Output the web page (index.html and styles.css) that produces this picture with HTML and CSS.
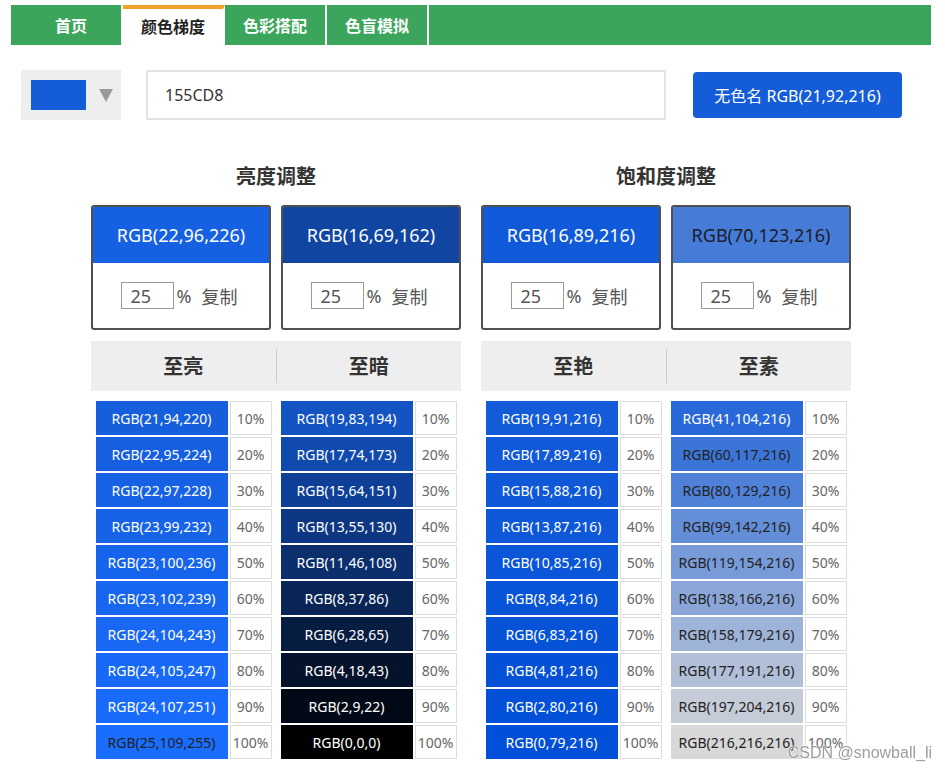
FILE: index.html
```html
<!DOCTYPE html>
<html lang="zh-CN">
<head>
<meta charset="utf-8">
<title>颜色梯度</title>
<link rel="stylesheet" href="styles.css">
</head>
<body>
<nav class="nav">
  <a class="tab tab-first">首页</a>
  <a class="tab tab-active">颜色梯度</a>
  <a class="tab">色彩搭配</a>
  <a class="tab">色盲模拟</a>
</nav>

<div class="toolbar">
  <div class="picker">
    <span class="swatch"></span>
    <span class="caret"></span>
  </div>
  <input class="hex" type="text" value="155CD8">
  <button class="name-btn">无色名 RGB(21,92,216)</button>
</div>

<main class="main">
  <section class="group">
    <h2 class="group-title">亮度调整</h2>
    <div class="cards">
      <div class="card">
        <div class="card-color" style="background:rgb(22,96,226)">RGB(22,96,226)</div>
        <div class="card-ctrl"><input class="pct-input" type="text" value="25"><span class="pct-sign">%</span><span class="copy">复制</span></div>
      </div>
      <div class="card">
        <div class="card-color" style="background:rgb(16,69,162)">RGB(16,69,162)</div>
        <div class="card-ctrl"><input class="pct-input" type="text" value="25"><span class="pct-sign">%</span><span class="copy">复制</span></div>
      </div>
    </div>
    <div class="heads">
      <div class="head">至亮</div>
      <div class="head head-right">至暗</div>
    </div>
    <div class="cols">
      <div class="col">
        <table class="grad">
          <tr><td class="c" style="background:rgb(21,94,220)">RGB(21,94,220)</td><td class="p">10%</td></tr>
          <tr><td class="c" style="background:rgb(22,95,224)">RGB(22,95,224)</td><td class="p">20%</td></tr>
          <tr><td class="c" style="background:rgb(22,97,228)">RGB(22,97,228)</td><td class="p">30%</td></tr>
          <tr><td class="c" style="background:rgb(23,99,232)">RGB(23,99,232)</td><td class="p">40%</td></tr>
          <tr><td class="c" style="background:rgb(23,100,236)">RGB(23,100,236)</td><td class="p">50%</td></tr>
          <tr><td class="c" style="background:rgb(23,102,239)">RGB(23,102,239)</td><td class="p">60%</td></tr>
          <tr><td class="c" style="background:rgb(24,104,243)">RGB(24,104,243)</td><td class="p">70%</td></tr>
          <tr><td class="c" style="background:rgb(24,105,247)">RGB(24,105,247)</td><td class="p">80%</td></tr>
          <tr><td class="c" style="background:rgb(24,107,251)">RGB(24,107,251)</td><td class="p">90%</td></tr>
          <tr><td class="c dark" style="background:rgb(25,109,255)">RGB(25,109,255)</td><td class="p">100%</td></tr>
        </table>
      </div>
      <div class="col">
        <table class="grad">
          <tr><td class="c" style="background:rgb(19,83,194)">RGB(19,83,194)</td><td class="p">10%</td></tr>
          <tr><td class="c" style="background:rgb(17,74,173)">RGB(17,74,173)</td><td class="p">20%</td></tr>
          <tr><td class="c" style="background:rgb(15,64,151)">RGB(15,64,151)</td><td class="p">30%</td></tr>
          <tr><td class="c" style="background:rgb(13,55,130)">RGB(13,55,130)</td><td class="p">40%</td></tr>
          <tr><td class="c" style="background:rgb(11,46,108)">RGB(11,46,108)</td><td class="p">50%</td></tr>
          <tr><td class="c" style="background:rgb(8,37,86)">RGB(8,37,86)</td><td class="p">60%</td></tr>
          <tr><td class="c" style="background:rgb(6,28,65)">RGB(6,28,65)</td><td class="p">70%</td></tr>
          <tr><td class="c" style="background:rgb(4,18,43)">RGB(4,18,43)</td><td class="p">80%</td></tr>
          <tr><td class="c" style="background:rgb(2,9,22)">RGB(2,9,22)</td><td class="p">90%</td></tr>
          <tr><td class="c" style="background:rgb(0,0,0)">RGB(0,0,0)</td><td class="p">100%</td></tr>
        </table>
      </div>
    </div>
  </section>

  <section class="group">
    <h2 class="group-title">饱和度调整</h2>
    <div class="cards">
      <div class="card">
        <div class="card-color" style="background:rgb(16,89,216)">RGB(16,89,216)</div>
        <div class="card-ctrl"><input class="pct-input" type="text" value="25"><span class="pct-sign">%</span><span class="copy">复制</span></div>
      </div>
      <div class="card">
        <div class="card-color dark" style="background:rgb(70,123,216)">RGB(70,123,216)</div>
        <div class="card-ctrl"><input class="pct-input" type="text" value="25"><span class="pct-sign">%</span><span class="copy">复制</span></div>
      </div>
    </div>
    <div class="heads">
      <div class="head">至艳</div>
      <div class="head head-right">至素</div>
    </div>
    <div class="cols">
      <div class="col">
        <table class="grad">
          <tr><td class="c" style="background:rgb(19,91,216)">RGB(19,91,216)</td><td class="p">10%</td></tr>
          <tr><td class="c" style="background:rgb(17,89,216)">RGB(17,89,216)</td><td class="p">20%</td></tr>
          <tr><td class="c" style="background:rgb(15,88,216)">RGB(15,88,216)</td><td class="p">30%</td></tr>
          <tr><td class="c" style="background:rgb(13,87,216)">RGB(13,87,216)</td><td class="p">40%</td></tr>
          <tr><td class="c" style="background:rgb(10,85,216)">RGB(10,85,216)</td><td class="p">50%</td></tr>
          <tr><td class="c" style="background:rgb(8,84,216)">RGB(8,84,216)</td><td class="p">60%</td></tr>
          <tr><td class="c" style="background:rgb(6,83,216)">RGB(6,83,216)</td><td class="p">70%</td></tr>
          <tr><td class="c" style="background:rgb(4,81,216)">RGB(4,81,216)</td><td class="p">80%</td></tr>
          <tr><td class="c" style="background:rgb(2,80,216)">RGB(2,80,216)</td><td class="p">90%</td></tr>
          <tr><td class="c" style="background:rgb(0,79,216)">RGB(0,79,216)</td><td class="p">100%</td></tr>
        </table>
      </div>
      <div class="col">
        <table class="grad">
          <tr><td class="c" style="background:rgb(41,104,216)">RGB(41,104,216)</td><td class="p">10%</td></tr>
          <tr><td class="c dark" style="background:rgb(60,117,216)">RGB(60,117,216)</td><td class="p">20%</td></tr>
          <tr><td class="c dark" style="background:rgb(80,129,216)">RGB(80,129,216)</td><td class="p">30%</td></tr>
          <tr><td class="c dark" style="background:rgb(99,142,216)">RGB(99,142,216)</td><td class="p">40%</td></tr>
          <tr><td class="c dark" style="background:rgb(119,154,216)">RGB(119,154,216)</td><td class="p">50%</td></tr>
          <tr><td class="c dark" style="background:rgb(138,166,216)">RGB(138,166,216)</td><td class="p">60%</td></tr>
          <tr><td class="c dark" style="background:rgb(158,179,216)">RGB(158,179,216)</td><td class="p">70%</td></tr>
          <tr><td class="c dark" style="background:rgb(177,191,216)">RGB(177,191,216)</td><td class="p">80%</td></tr>
          <tr><td class="c dark" style="background:rgb(197,204,216)">RGB(197,204,216)</td><td class="p">90%</td></tr>
          <tr><td class="c dark" style="background:rgb(216,216,216)">RGB(216,216,216)</td><td class="p">100%</td></tr>
        </table>
      </div>
    </div>
  </section>
</main>

<div class="watermark">CSDN @snowball_li</div>
</body>
</html>
```

FILE: styles.css
```css
* { box-sizing: border-box; }

html, body {
  margin: 0;
  padding: 0;
  background: #fff;
}

body {
  font-family: "Noto Sans", "Noto Sans CJK SC", sans-serif;
  color: #333;
  overflow: hidden;
}

.nav {
  display: flex;
  height: 40px;
  margin: 5px 14px 0 11px;
  background: #3ba55c;
}

.tab {
  display: flex;
  align-items: center;
  justify-content: center;
  width: 102px;
  height: 40px;
  border-right: 2px solid #fff;
  color: #fff;
  font-family: "Noto Sans CJK SC", sans-serif;
  font-weight: 700;
  font-size: 16px;
  text-decoration: none;
}

.tab-first {
  width: 112px;
  padding-left: 10px;
}

.tab-active {
  background: #fff;
  color: #222;
  border-top: 4px solid #f0a22a;
  padding-bottom: 2px;
}

.toolbar {
  display: flex;
  align-items: center;
  height: 50px;
  margin: 25px 0 0 21px;
}

.picker {
  display: flex;
  align-items: center;
  width: 100px;
  height: 50px;
  background: #eeeeee;
  padding-left: 10px;
}

.swatch {
  width: 55px;
  height: 30px;
  background: #155cd8;
}

.caret {
  width: 0;
  height: 0;
  margin-left: 13px;
  border-left: 7px solid transparent;
  border-right: 7px solid transparent;
  border-top: 13px solid #999;
}

.hex {
  width: 520px;
  height: 50px;
  margin-left: 25px;
  border: 2px solid #e3e3e3;
  padding: 0 0 0 17px;
  font-family: "Noto Sans", sans-serif;
  font-size: 16px;
  color: #333;
  outline: none;
}

.name-btn {
  width: 209px;
  height: 46px;
  margin-left: 27px;
  border: none;
  border-radius: 4px;
  background: #155cd8;
  color: #fff;
  font-family: "Noto Sans", "Noto Sans CJK SC", sans-serif;
  font-size: 16px;
  padding: 0;
}

.main {
  display: flex;
  gap: 20px;
  width: 760px;
  margin: 0 0 0 91px;
}

.group {
  width: 370px;
}

.group-title {
  margin: 41px 0 0;
  height: 30px;
  line-height: 30px;
  text-align: center;
  font-family: "Noto Sans CJK SC", sans-serif;
  font-size: 20px;
  font-weight: 700;
  color: #333;
}

.cards {
  display: flex;
  gap: 10px;
  margin-top: 14px;
}

.card {
  width: 180px;
  height: 125px;
  border: 2px solid #505050;
  border-radius: 3px;
  overflow: hidden;
}

.card-color {
  height: 56px;
  display: flex;
  align-items: center;
  justify-content: center;
  color: #fff;
  font-size: 18px;
}

.card-color.dark { color: #1c1c28; }

.card-ctrl {
  display: flex;
  align-items: center;
  justify-content: center;
  height: 65px;
  padding-right: 4px;
  color: #555;
  font-size: 18px;
}

.pct-input {
  width: 53px;
  height: 27px;
  border: 1px solid #9a9a9a;
  padding: 0 0 0 9px;
  font-family: "Noto Sans", sans-serif;
  font-size: 18px;
  color: #555;
  outline: none;
}

.pct-sign {
  margin-left: 3px;
}

.copy {
  margin-left: 10px;
  font-family: "Noto Sans CJK SC", sans-serif;
}

.heads {
  display: flex;
  margin-top: 11px;
  height: 50px;
  background: #eeeeee;
  align-items: center;
}

.head {
  flex: 1;
  height: 34px;
  display: flex;
  align-items: center;
  justify-content: center;
  padding-bottom: 2px;
  font-family: "Noto Sans CJK SC", sans-serif;
  font-size: 20px;
  font-weight: 700;
  color: #333;
}

.head-right {
  border-left: 1px solid #cccccc;
}

.cols {
  display: flex;
  margin-top: 8px;
}

.col {
  flex: 1;
  display: flex;
  justify-content: center;
}

.grad {
  border-collapse: separate;
  border-spacing: 2px;
}

.grad td {
  height: 34px;
  padding: 0;
  text-align: center;
  font-size: 14px;
}

.grad .c {
  width: 132px;
  color: #fff;
}

.grad .c.dark { color: #222; }

.grad .p {
  width: 42px;
  border: 1px solid #dddddd;
  color: #666;
}

.watermark {
  position: fixed;
  right: 13px;
  bottom: 9px;
  font-family: "Liberation Sans", sans-serif;
  font-size: 16px;
  color: rgba(140, 140, 140, 0.85);
  text-shadow: 0 0 2px #fff, 0 0 2px #fff;
}
```
